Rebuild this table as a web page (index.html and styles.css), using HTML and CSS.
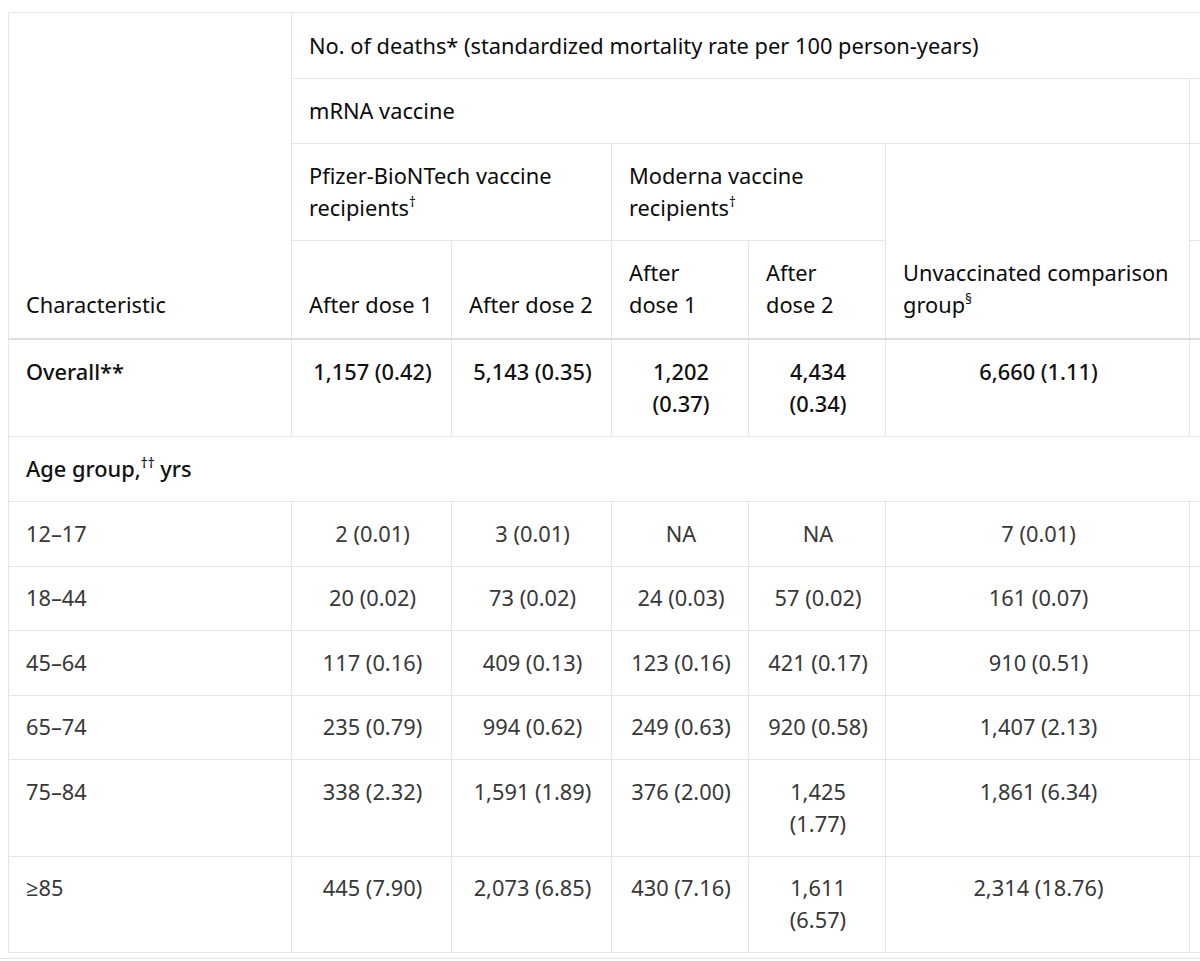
FILE: index.html
```html
<!DOCTYPE html>
<html lang="en">
<head>
<meta charset="utf-8">
<title>Mortality table</title>
<link rel="stylesheet" href="styles.css">
</head>
<body>
<div class="wrap">
  <table class="mort">
    <colgroup>
      <col class="c-char">
      <col class="c-dose">
      <col class="c-dose">
      <col class="c-mod">
      <col class="c-mod">
      <col class="c-unvax">
      <col class="c-more">
    </colgroup>
    <thead>
      <tr class="top">
        <th rowspan="4" class="char">Characteristic</th>
        <th colspan="6">No. of deaths* (standardized mortality rate per 100 person-years)</th>
      </tr>
      <tr>
        <th colspan="5">mRNA vaccine</th>
        <th></th>
      </tr>
      <tr>
        <th colspan="2">Pfizer-BioNTech vaccine recipients<sup>†</sup></th>
        <th colspan="2">Moderna vaccine recipients<sup>†</sup></th>
        <th rowspan="2" class="bottom">Unvaccinated comparison group<sup>§</sup></th>
        <th></th>
      </tr>
      <tr class="bottom">
        <th>After dose 1</th>
        <th>After dose 2</th>
        <th>After dose 1</th>
        <th>After dose 2</th>
        <th></th>
      </tr>
    </thead>
    <tbody>
      <tr class="strong">
        <td class="label">Overall**</td>
        <td>1,157 (0.42)</td>
        <td>5,143 (0.35)</td>
        <td>1,202 (0.37)</td>
        <td>4,434 (0.34)</td>
        <td>6,660 (1.11)</td>
        <td></td>
      </tr>
      <tr class="strong">
        <td class="label" colspan="7">Age group,<sup>††</sup> yrs</td>
      </tr>
      <tr class="data">
        <td class="label">12–17</td>
        <td>2 (0.01)</td>
        <td>3 (0.01)</td>
        <td>NA</td>
        <td>NA</td>
        <td>7 (0.01)</td>
        <td></td>
      </tr>
      <tr class="data">
        <td class="label">18–44</td>
        <td>20 (0.02)</td>
        <td>73 (0.02)</td>
        <td>24 (0.03)</td>
        <td>57 (0.02)</td>
        <td>161 (0.07)</td>
        <td></td>
      </tr>
      <tr class="data">
        <td class="label">45–64</td>
        <td>117 (0.16)</td>
        <td>409 (0.13)</td>
        <td>123 (0.16)</td>
        <td>421 (0.17)</td>
        <td>910 (0.51)</td>
        <td></td>
      </tr>
      <tr class="data">
        <td class="label">65–74</td>
        <td>235 (0.79)</td>
        <td>994 (0.62)</td>
        <td>249 (0.63)</td>
        <td>920 (0.58)</td>
        <td>1,407 (2.13)</td>
        <td></td>
      </tr>
      <tr class="data">
        <td class="label">75–84</td>
        <td>338 (2.32)</td>
        <td>1,591 (1.89)</td>
        <td>376 (2.00)</td>
        <td>1,425 (1.77)</td>
        <td>1,861 (6.34)</td>
        <td></td>
      </tr>
      <tr class="data">
        <td class="label">≥85</td>
        <td>445 (7.90)</td>
        <td>2,073 (6.85)</td>
        <td>430 (7.16)</td>
        <td>1,611 (6.57)</td>
        <td>2,314 (18.76)</td>
        <td></td>
      </tr>
    </tbody>
  </table>
</div>
</body>
</html>
```

FILE: styles.css
```css
html, body {
  margin: 0;
  background: #ffffff;
}

body {
  font-family: "Noto Sans", "Open Sans", "DejaVu Sans", sans-serif;
  color: #1f1f1f;
  overflow: hidden;
}

.wrap {
  padding: 12px 0 5px 8px;
  overflow: hidden;
  border-bottom: 1px solid #e4e4e6;
}

.mort {
  border-collapse: collapse;
  table-layout: fixed;
  width: 1432px;
  font-size: 21.8px;
  line-height: 32px;
}

.c-char { width: 283px; }
.c-dose { width: 160px; }
.c-mod { width: 137px; }
.c-unvax { width: 304px; }
.c-more { width: 250px; }

.mort th,
.mort td {
  border: 1px solid #e4e5e7;
  padding: 16px 15px 16px 17px;
}

.mort tr.top th {
  padding-top: 17px;
}

.mort tr.bottom th,
.mort th.char,
.mort th.bottom {
  padding-bottom: 17px;
}

.mort tbody td {
  padding-top: 16px;
  padding-bottom: 16px;
}

.mort tbody tr.data td {
  padding-top: 15.75px;
  padding-bottom: 15.75px;
}

.mort th {
  text-align: left;
  font-weight: 400;
  vertical-align: middle;
  color: #0c0c0c;
}

.mort th.char,
.mort th.bottom,
.mort tr.bottom th {
  vertical-align: bottom;
}

.mort thead tr:last-child th,
.mort thead th.char,
.mort thead th.bottom {
  border-bottom: 2px solid #dcdee1;
}

.mort td {
  text-align: center;
  vertical-align: top;
  color: #383838;
  font-weight: 400;
}

.mort td.label {
  text-align: left;
}

.mort tr.strong td {
  color: #111111;
  font-weight: 500;
}

.mort sup {
  font-size: 0.62em;
  line-height: 0;
  vertical-align: 0.65em;
  color: inherit;
}
```
